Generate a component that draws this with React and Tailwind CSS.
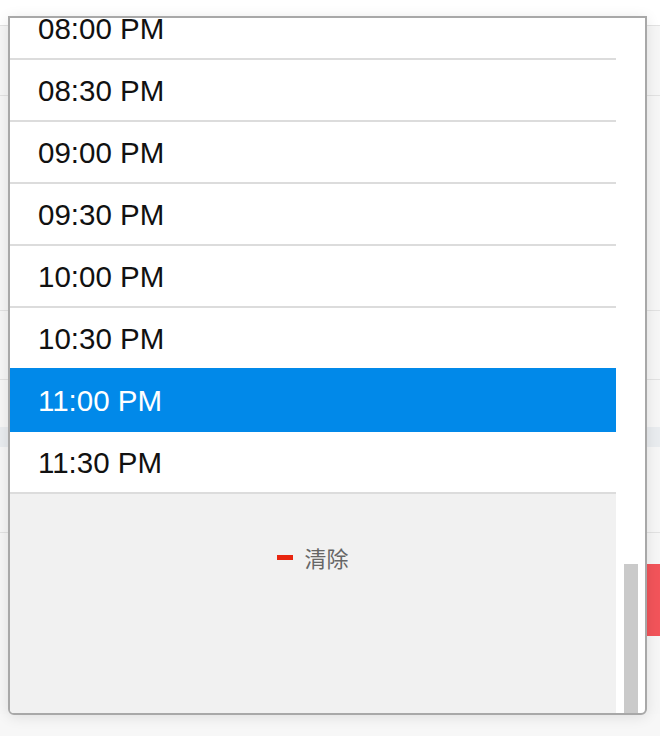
import React from "react";

const times = [
  "08:00 PM",
  "08:30 PM",
  "09:00 PM",
  "09:30 PM",
  "10:00 PM",
  "10:30 PM",
  "11:00 PM",
  "11:30 PM",
];

const selected = "11:00 PM";

const App = () => {
  const selIndex = times.indexOf(selected);

  return (
    <div
      className="relative w-[660px] h-[736px] overflow-hidden bg-[#f7f7f7]"
      style={{ fontFamily: '"Liberation Sans", Arial, sans-serif' }}
    >
      {/* page behind the dropdown */}
      <div className="flex flex-col">
        <div className="h-[26px] bg-white border-b border-[#e2e2e2]"></div>
        <div className="h-[70px] bg-[#f6f6f6] border-b border-[#e2e2e2]"></div>
        <div className="h-[215px] bg-[#f6f6f6] border-b border-[#e2e2e2]"></div>
        <div className="h-[69px] bg-[#f6f6f6] border-b border-[#e2e2e2]"></div>
        <div className="h-[47px] bg-[#f6f6f6]"></div>
        <div className="h-[20px] bg-[#e9ecef]"></div>
        <div className="h-[86px] bg-[#f6f6f6] border-b border-[#e2e2e2]"></div>
        <div className="h-[181px] bg-[#f6f6f6] flex justify-end pt-[31px]">
          <div className="w-[14px] h-[72px] bg-[#f2545a]"></div>
        </div>
        <div className="flex-1 h-[22px] bg-[#eef0f3]"></div>
      </div>

      {/* time dropdown */}
      <div className="absolute left-[8px] top-[16px] w-[639px] h-[699px] flex bg-white border-2 border-[#a8a8a8] rounded-b-[6px] overflow-hidden shadow-[0_2px_14px_rgba(0,0,0,0.1)]">
        <div className="w-[606px] flex flex-col">
          <div className="-mt-[20px]">
            {times.map((t, i) => {
              const isSel = i === selIndex;
              const beforeSel = i === selIndex - 1;
              return (
                <div
                  key={t}
                  className={
                    "h-[62px] pl-[28px] pt-[2px] flex items-center text-[29.5px] border-b-2 " +
                    (isSel
                      ? "bg-[#0189e9] text-white border-[#0189e9]"
                      : beforeSel
                      ? "bg-white text-[#111] border-[#0189e9]"
                      : "bg-white text-[#111] border-[#dcdcdc]")
                  }
                >
                  {t}
                </div>
              );
            })}
          </div>
          <div className="flex-1 bg-[#f1f1f1] pt-[48px]">
            <button className="mx-auto h-[30px] flex items-center gap-[11px]">
              <span className="w-[16px] h-[5px] bg-[#e8250f]"></span>
              <span
                className="text-[22px] text-[#666]"
                style={{ fontFamily: '"Noto Sans CJK SC", "Liberation Sans", sans-serif' }}
              >
                清除
              </span>
            </button>
          </div>
        </div>
        <div className="flex-1 flex items-end pl-[8px]">
          <div className="w-[14px] h-[149px] bg-[#cacaca]"></div>
        </div>
      </div>
    </div>
  );
};

export default App;
